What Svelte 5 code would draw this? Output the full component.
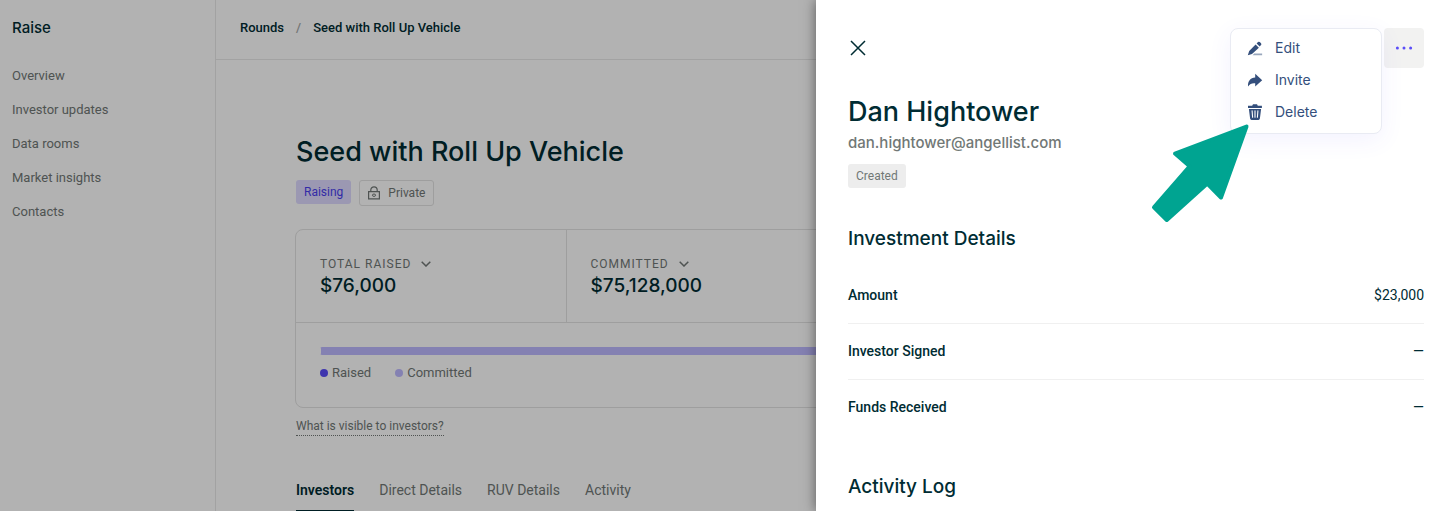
<script>
  const nav = ['Overview', 'Investor updates', 'Data rooms', 'Market insights', 'Contacts'];
  const stats = [
    { label: 'TOTAL RAISED', value: '$76,000' },
    { label: 'COMMITTED', value: '$75,128,000' }
  ];
  const tabs = ['Investors', 'Direct Details', 'RUV Details', 'Activity'];
  const details = [
    ['Amount', '$23,000'],
    ['Investor Signed', '—'],
    ['Funds Received', '—']
  ];
  const raisedShare = 0.1;
</script>

<div class="page">
  <aside class="sidebar">
    <h2 class="brand">Raise</h2>
    <nav>
      {#each nav as item}
        <a href="#top">{item}</a>
      {/each}
    </nav>
  </aside>

  <main>
    <header class="crumbs">
      <a href="#top">Rounds</a>
      <span class="slash">/</span>
      <a href="#top">Seed with Roll Up Vehicle</a>
    </header>

    <section class="content">
      <h1>Seed with Roll Up Vehicle</h1>
      <div class="tags">
        <span class="tag raising">Raising</span>
        <span class="tag private">
          <svg width="12" height="14" viewBox="0 0 12 14" fill="none" stroke="currentColor">
            <path d="M.6 5.6h10.8v7.2H.6zM2.8 5.5V4a3.2 3.2 0 0 1 6.4 0v1.5" stroke-width="1.2" />
            <ellipse cx="6" cy="9.2" rx="1.6" ry="1.2" />
          </svg>
          Private
        </span>
      </div>

      <div class="card">
        <div class="stats">
          {#each stats as stat}
            <div class="stat">
              <button class="label">
                {stat.label}
                <svg width="10" height="6" viewBox="0 0 10 6" fill="none" stroke="currentColor" stroke-width="1.5">
                  <path d="M.7.7 5 5 9.3.7" />
                </svg>
              </button>
              <strong>{stat.value}</strong>
            </div>
          {/each}
        </div>
        <div class="progress">
          <div class="bar"><div class="fill" style:width="{raisedShare}%"></div></div>
          <div class="legend">
            <span><i class="dot raised"></i>Raised</span>
            <span><i class="dot committed"></i>Committed</span>
          </div>
        </div>
      </div>

      <a class="visible" href="#top">What is visible to investors?</a>

      <div class="tabs" role="tablist">
        {#each tabs as tab, i}
          <button role="tab" aria-selected={i === 0} class:active={i === 0}>{tab}</button>
        {/each}
      </div>
    </section>
  </main>

  <div class="backdrop"></div>

  <div class="drawer" role="dialog" aria-labelledby="person">
    <div class="toolbar">
      <button class="close" aria-label="Close">
        <svg width="20" height="20" viewBox="0 0 20 20" fill="none" stroke="currentColor" stroke-width="1.5">
          <path d="M3 3l14 14M17 3 3 17" />
        </svg>
      </button>
      <div class="actions">
        <button class="more" aria-label="More actions">
          <svg width="18" height="4" viewBox="0 0 18 4" fill="currentColor">
            <circle cx="2.4" cy="2" r="1.5" /><circle cx="9" cy="2" r="1.5" /><circle cx="15.6" cy="2" r="1.5" />
          </svg>
        </button>
        <div class="menu" role="menu">
          <button role="menuitem">
            <svg width="16" height="16" viewBox="0 0 16 16" fill="currentColor">
              <path d="M7.2 13.4h7.9v1.8H5.6z" opacity=".5" />
              <path d="M8.6 4.4 11.9 7.7 5 14 .8 15.2 2.2 11zM9.6 3.5l1.4-1.4a1.3 1.3 0 0 1 1.8 0l1.2 1.2a1.3 1.3 0 0 1 0 1.8l-1.3 1.5z" />
            </svg>
            Edit
          </button>
          <button role="menuitem">
            <svg width="16" height="16" viewBox="0 0 16 16" fill="currentColor">
              <path d="M8.2 1.8 15.2 8.2 8.2 14.4V11.2C4.9 11 3 11.4 1.1 14.6.4 9.2 3.5 5.6 8.2 5.4z" />
            </svg>
            Invite
          </button>
          <button role="menuitem">
            <svg width="16" height="16" viewBox="0 0 16 16">
              <path fill="currentColor" d="M5.2 1.8 6 .3h4l.8 1.5h4.1v2.1H1V1.8zM1.9 5h12.2l-1.2 9.6a1.5 1.5 0 0 1-1.5 1.3H4.6a1.5 1.5 0 0 1-1.5-1.3z" />
              <path fill="none" stroke="#fff" stroke-width="1.1" stroke-linecap="round" d="M5.1 6.8l.5 6.4M8 6.8v6.4M10.9 6.8l-.5 6.4" />
            </svg>
            Delete
          </button>
        </div>
      </div>
    </div>

    <h1 id="person">Dan Hightower</h1>
    <p class="email">dan.hightower@angellist.com</p>
    <span class="tag created">Created</span>

    <h2>Investment Details</h2>
    <dl>
      {#each details as [name, value]}
        <div class="row">
          <dt>{name}</dt>
          <dd>{value}</dd>
        </div>
      {/each}
    </dl>
    <h2>Activity Log</h2>

    <svg class="pointer" width="100" height="102" viewBox="0 0 100 102">
      <path d="M96.5 4.5 25 31.5 39.7 44.3 4 85.3 16.8 98 57.3 61.5 71 75.5z" />
    </svg>
  </div>
</div>

<style>
  :global(body) {
    background: #fff;
    color: #002c33;
    font-family: Roboto, Inter, sans-serif;
    font-size: 14px;
    line-height: 20px;
    -webkit-font-smoothing: antialiased;
  }
  h1, h2, p, dl, dd { margin: 0; }
  h1, h2, .email, .stat strong, .menu button { font-family: Inter, sans-serif; }
  h1 { font-size: 27px; line-height: 36px; font-weight: 500; }
  a { color: inherit; text-decoration: none; }
  button {
    border: 0;
    padding: 0;
    background: none;
    color: inherit;
    font: inherit;
    cursor: pointer;
  }
  .page {
    position: relative;
    display: flex;
    height: 100vh;
    overflow: hidden;
  }
  .sidebar {
    box-sizing: border-box;
    flex: 0 0 216px;
    padding: 16px 12px;
    border-right: 1px solid #e8e8e8;
  }
  .brand { font-size: 15px; line-height: 24px; font-weight: 500; }
  .sidebar nav {
    display: flex;
    flex-direction: column;
    gap: 14px;
    margin-top: 26px;
    font-size: 13px;
    color: #717876;
  }
  main { flex: 1; min-width: 0; }
  .crumbs {
    display: flex;
    gap: 12px;
    padding: 18px 24px 21px;
    border-bottom: 1px solid #e8e8e8;
    font-size: 13px;
    font-weight: 500;
  }
  .slash { color: #a5a9a8; }
  .content { padding: 74px 72px 0 80px; }
  .tags { display: flex; align-items: flex-start; gap: 8px; margin-top: 10px; }
  .tag {
    display: inline-flex;
    align-items: center;
    height: 24px;
    padding: 0 8px;
    border-radius: 3px;
    font-size: 12px;
  }
  .raising { background: #dedaff; color: #4a3ff0; }
  .private { gap: 8px; border: 1px solid #e2e2e2; color: #717876; }
  .created { background: #ededed; color: #717876; }
  .card {
    margin: 23px 0 0 -1px;
    border: 1px solid #e2e2e2;
    border-radius: 8px;
  }
  .stats {
    display: grid;
    grid-template-columns: repeat(4, 1fr);
    border-bottom: 1px solid #e2e2e2;
  }
  .stat {
    display: flex;
    flex-direction: column;
    align-items: flex-start;
    padding: 24px;
    border-right: 1px solid #e2e2e2;
  }
  .label {
    display: flex;
    align-items: center;
    gap: 10px;
    font-size: 12px;
    line-height: 20px;
    letter-spacing: 1px;
    color: #717876;
  }
  .stat strong { font-size: 19px; line-height: 24px; font-weight: 500; }
  .progress { padding: 24px 24px 16px; }
  .bar { height: 8px; border-radius: 2px; background: #beb9ff; overflow: hidden; }
  .fill { height: 100%; background: #fff; }
  .legend {
    display: flex;
    gap: 24px;
    margin: 8px 0;
    font-size: 13px;
    color: #717876;
  }
  .legend span { display: flex; align-items: center; gap: 4px; }
  .dot { width: 8px; height: 8px; border-radius: 50%; }
  .raised { background: #5a4df9; }
  .committed { background: #beb9ff; }
  .visible {
    display: inline-block;
    margin-top: 10px;
    border-bottom: 1px dotted #717876;
    font-size: 12px;
    line-height: 17px;
    color: #717876;
  }
  .tabs { display: flex; gap: 25px; margin-top: 44px; color: #717876; }
  .tabs button { padding-bottom: 10px; border-bottom: 2px solid transparent; }
  .tabs .active { border-color: #002c33; color: #002c33; font-weight: 600; }
  .backdrop { position: absolute; inset: 0; background: rgba(0, 0, 0, .3); }
  .drawer {
    position: absolute;
    inset: 0 0 0 auto;
    box-sizing: border-box;
    width: 635px;
    max-width: 100%;
    padding: 28px 27px 0 32px;
    background: #fff;
    box-shadow: 0 0 12px rgba(0, 0, 0, .5);
  }
  .toolbar {
    display: flex;
    align-items: center;
    justify-content: space-between;
    margin-bottom: 25px;
  }
  .close, .more { display: flex; align-items: center; justify-content: center; }
  .actions { position: relative; }
  .more {
    width: 40px;
    height: 40px;
    border-radius: 4px;
    background: #f2f2f1;
    color: #5a4df9;
  }
  .menu {
    position: absolute;
    top: 0;
    right: 42px;
    box-sizing: border-box;
    width: 152px;
    padding: 3px 0 5px;
    border: 1px solid #e9ebf3;
    border-radius: 8px;
    background: #fff;
    box-shadow: 0 6px 24px rgba(90, 77, 249, .07);
  }
  .menu button {
    display: flex;
    align-items: center;
    gap: 12px;
    width: 100%;
    height: 32px;
    padding: 0 16px;
    color: #344f7c;
  }
  .email { margin: 0 0 9px; font-size: 15px; line-height: 24px; font-weight: 500; color: #717876; }
  .drawer h1 { line-height: 38px; }
  .drawer h2 { margin-top: 39px; font-size: 19px; line-height: 24px; font-weight: 500; }
  .created { display: flex; width: max-content; }
  dl { margin-top: 17px; }
  .row {
    display: flex;
    justify-content: space-between;
    padding: 17px 0 18px;
    border-bottom: 1px solid #f0f0f0;
  }
  .row:last-child { border-bottom-color: transparent; }
  dt { font-weight: 500; }
  .pointer {
    position: absolute;
    top: 122px;
    right: 201px;
    fill: #00a491;
    stroke: #00a491;
    stroke-width: 4px;
    stroke-linejoin: round;
  }
</style>
